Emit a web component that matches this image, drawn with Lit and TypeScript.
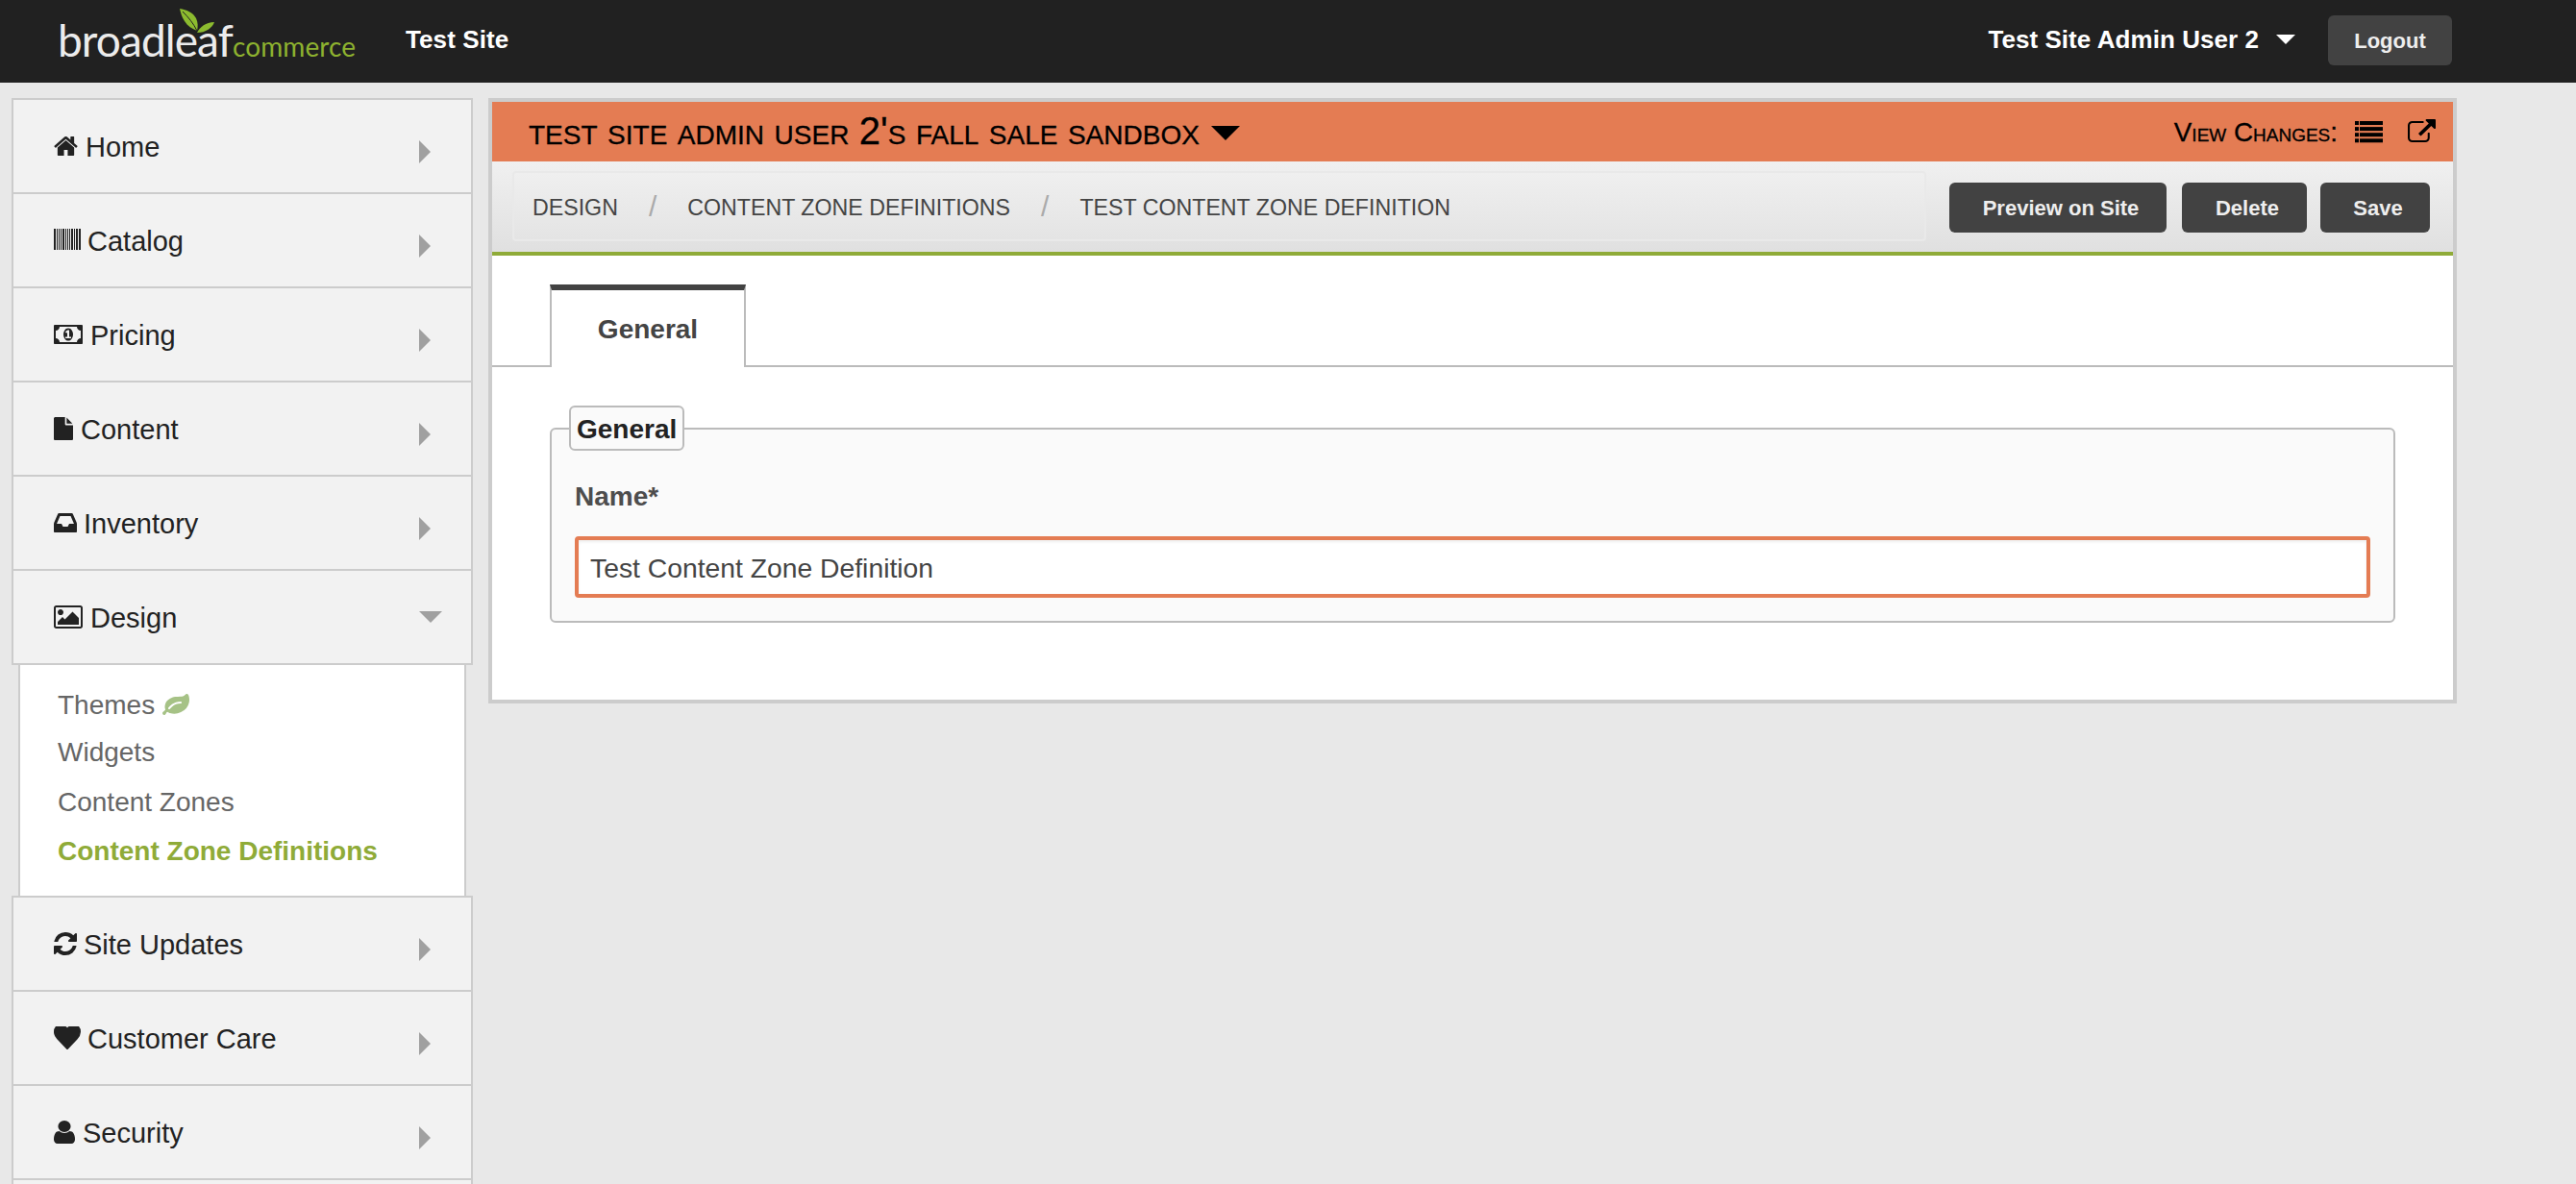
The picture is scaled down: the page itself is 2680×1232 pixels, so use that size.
import { LitElement, html, css, svg } from "lit";
import { customElement } from "lit/decorators.js";

type Ic = { vb: string; w: number; h: number; top: number; gap: number; body: unknown };

const P = {
  home: "M1472 992v480q0 26-19 45t-45 19h-384v-384h-256v384h-384q-26 0-45-19t-19-45v-480q0-1 .5-3t.5-3l575-474 575 474q1 2 1 6zm223-69l-62 74q-8 9-21 11h-3q-13 0-21-7l-692-577-692 577q-12 8-24 7-13-2-21-11l-62-74q-8-10-7-23.5t11-21.5l719-599q32-26 76-26t76 26l244 204v-195q0-14 9-23t23-9h192q14 0 23 9t9 23v408l219 182q10 8 11 21.5t-7 23.5z",
  money: "M768 1152h384v-96h-128v-448h-114l-148 117 77 98q42-34 55-54h2v287h-128v96zm512-256q0 70-21 142t-59.5 134-101.5 101-138 39-138-39-101.5-101-59.5-134-21-142 21-142 59.5-134 101.5-101 138-39 138 39 101.5 101 59.5 134 21 142zm512 256v-512q-106 0-181-75t-75-181h-1152q0 106-75 181t-181 75v512q106 0 181 75t75 181h1152q0-106 75-181t181-75zm128-832v1152q0 26-19 45t-45 19h-1792q-26 0-45-19t-19-45v-1152q0-26 19-45t45-19h1792q26 0 45 19t19 45z",
  file: "M1024 512v-472q22 14 36 28l408 408q14 14 28 36h-472zm-128 32q0 40 28 68t68 28h544v1056q0 40-28 68t-68 28h-1344q-40 0-68-28t-28-68v-1600q0-40 28-68t68-28h800v544z",
  inbox: "M1023 960h316q-1-3-2.5-8.5t-2.5-7.5l-212-496h-708l-212 496q-1 3-2.5 8.5t-2.5 7.5h316l95 192h320zm513 30v482q0 26-19 45t-45 19h-1408q-26 0-45-19t-19-45v-482q0-62 25-123l238-552q10-25 36.5-42t52.5-17h832q26 0 52.5 17t36.5 42l238 552q25 61 25 123z",
  picture: "M576 576q0 80-56 136t-136 56-136-56-56-136 56-136 136-56 136 56 56 136zm1024 384v448h-1408v-192l320-320 160 160 512-512zm96-704h-1600q-13 0-22.5 9.5t-9.5 22.5v1216q0 13 9.5 22.5t22.5 9.5h1600q13 0 22.5-9.5t9.5-22.5v-1216q0-13-9.5-22.5t-22.5-9.5zm160 32v1216q0 66-47 113t-113 47h-1600q-66 0-113-47t-47-113v-1216q0-66 47-113t113-47h1600q66 0 113 47t47 113z",
  refresh: "M1511 1056q0 5-1 7-64 268-268 434.5t-478 166.5q-146 0-282.5-55t-243.5-157l-129 129q-19 19-45 19t-45-19-19-45v-448q0-26 19-45t45-19h448q26 0 45 19t19 45-19 45l-137 137q71 66 161 102t187 36q134 0 250-65t186-179q11-17 53-117 8-23 30-23h192q13 0 22.5 9.5t9.5 22.5zm25-800v448q0 26-19 45t-45 19h-448q-26 0-45-19t-19-45 19-45l138-138q-148-137-349-137-134 0-250 65t-186 179q-11 17-53 117-8 23-30 23h-199q-13 0-22.5-9.5t-9.5-22.5v-7q65-268 270-434.5t480-166.5q146 0 284 55.5t245 156.5l130-129q19-19 45-19t45 19 19 45z",
  heart: "M896 1664q-26 0-44-18l-624-602q-10-8-27.5-26t-55.5-65.5-68-97.5-53.5-121-23.5-138q0-220 127-344t351-124q62 0 126.5 21.5t120 58 95.5 68.5 76 68q36-36 76-68t95.5-68.5 120-58 126.5-21.5q224 0 351 124t127 344q0 221-229 450l-623 600q-18 18-44 18z",
  user: "M1536 1399q0 109-62.5 187t-150.5 78h-854q-88 0-150.5-78t-62.5-187q0-85 8.5-160.5t31.5-152 58.5-131 94-89 134.5-34.5q131 128 313 128t313-128q76 0 134.5 34.5t94 89 58.5 131 31.5 152 8.5 160.5zm-256-887q0 159-112.5 271.5t-271.5 112.5-271.5-112.5-112.5-271.5 112.5-271.5 271.5-112.5 271.5 112.5 112.5 271.5z",
  ext: "M1408 928v320q0 119-84.5 203.5t-203.5 84.5h-832q-119 0-203.5-84.5t-84.5-203.5v-832q0-119 84.5-203.5t203.5-84.5h704q14 0 23 9t9 23v64q0 14-9 23t-23 9h-704q-66 0-113 47t-47 113v832q0 66 47 113t113 47h832q66 0 113-47t47-113v-320q0-14 9-23t23-9h64q14 0 23 9t9 23zm384-864v512q0 26-19 45t-45 19-45-19l-176-176-652 652q-10 10-23 10t-23-10l-114-114q-10-10-10-23t10-23l652-652-176-176q-19-19-19-45t19-45 45-19h512q26 0 45 19t19 45z",
  leaf: "M1280 704q0-26-19-45t-45-19q-172 0-318 49.5t-259.5 134-235.5 219.5q-19 21-19 45 0 26 19 45t45 19q24 0 45-19 27-24 74-71t67-66q137-124 268.5-176t313.5-52q26 0 45-19t19-45zm512-198q0 95-20 193-46 224-184.5 383t-357.5 268q-214 108-438 108-148 0-286-47-15-5-88-42t-96-37q-16 0-39.5 32t-45 70-52.5 70-60 32q-30 0-51-11t-31-24-27-42q-2-4-6-11t-5.5-10-3-9.5-1.5-13.5q0-35 31-73.5t68-65.5 68-56 31-48q0-4-14-38t-16-44q-9-51-9-104 0-115 43.5-220t119-184.5 170.5-139 204-95.5q55-18 145-25.5t179.5-9 178.5-6 163.5-24 113.5-56.5l29.5-29.5 29.5-28 27-20 36.5-16 43.5-4.5q39 0 70.5 46t47.5 112 24 124 8 96z",
};

const p = (d: string) => svg`<path d=${d}></path>`;

const barcodeBars: [number, number][] = [
  [0, 2], [3, 1], [5, 1], [7, 1], [9, 2], [12, 1], [14, 1], [16, 1], [18, 2], [21, 1], [23, 2], [26, 2],
];
const barcode = barcodeBars.map(([x, w]) => svg`<rect x=${x} y="0" width=${w} height="22"></rect>`);

const listIcon = [0, 1, 2, 3].map(
  (i) => svg`<rect x="0" y=${i * 6.1} width="4" height="4"></rect><rect x="5" y=${i * 6.1} width="24" height="4"></rect>`
);

const ROWS_A: { label: string; ic: Ic; open?: boolean }[] = [
  { label: "Home", ic: { vb: "64 256 1664 1280", w: 25, h: 20, top: 38, gap: 8, body: p(P.home) } },
  { label: "Catalog", ic: { vb: "0 0 28 22", w: 28, h: 22, top: 36, gap: 7, body: barcode } },
  { label: "Pricing", ic: { vb: "0 256 1920 1280", w: 30, h: 20, top: 38, gap: 8, body: p(P.money) } },
  { label: "Content", ic: { vb: "0 0 1536 1792", w: 20, h: 24, top: 36, gap: 8, body: p(P.file) } },
  { label: "Inventory", ic: { vb: "0 256 1536 1280", w: 24, h: 20, top: 38, gap: 7, body: p(P.inbox) } },
  { label: "Design", ic: { vb: "-64 128 1920 1536", w: 30, h: 24, top: 36, gap: 8, body: p(P.picture) }, open: true },
];
const ROWS_B: { label: string; ic: Ic }[] = [
  { label: "Site Updates", ic: { vb: "0 128 1536 1536", w: 24, h: 24, top: 36, gap: 7, body: p(P.refresh) } },
  { label: "Customer Care", ic: { vb: "0 256 1792 1408", w: 28, h: 24, top: 36, gap: 7, body: p(P.heart) } },
  { label: "Security", ic: { vb: "256 128 1280 1536", w: 22, h: 24, top: 36, gap: 8, body: p(P.user) } },
];

@customElement("app-root")
export class AppRoot extends LitElement {
  static styles = css`
    :host {
      display: block;
      height: 1232px;
      overflow: hidden;
      background: #e8e8e8;
      font-family: "Liberation Sans", Arial, sans-serif;
    }
    * { box-sizing: border-box; }

    .topbar {
      height: 86px;
      background: #212121;
      display: flex;
      align-items: flex-start;
      color: #fff;
    }
    .logo {
      position: relative;
      margin: 0 0 0 60px;
      width: 312px;
      height: 86px;
      padding-top: 14px;
      white-space: nowrap;
      font-family: Lato, sans-serif;
      line-height: 56px;
    }
    .logo .b { font-size: 46px; color: #ececec; letter-spacing: -0.9px; }
    .logo .c { font-size: 28px; color: #8db22f; letter-spacing: 0.1px; }
    .logo svg { position: absolute; left: 126px; top: 8px; }
    .site {
      margin-top: 26px;
      font: bold 26px/30px "Liberation Sans", Arial, sans-serif;
      letter-spacing: 0.1px;
      margin-left: 50px;
    }
    .user {
      margin-left: auto;
      margin-top: 26px;
      display: flex;
      align-items: flex-start;
      font: bold 26px/30px "Liberation Sans", Arial, sans-serif;
      letter-spacing: 0.06px;
    }
    .user i {
      display: block;
      margin: 10px 34px 0 18px;
      border-top: 10px solid #fff;
      border-left: 10px solid transparent;
      border-right: 10px solid transparent;
    }
    .logout {
      margin: 16px 129px 0 0;
      width: 129px;
      height: 52px;
      background: #424242;
      border-radius: 6px;
      color: #eee;
      font: bold 22px/54px "Liberation Sans", Arial, sans-serif;
      text-align: center;
    }

    .body { display: flex; align-items: flex-start; padding: 16px 0 0 12px; gap: 16px; }
    .side { width: 480px; flex: none; }
    .group { border: 2px solid #ccc; border-bottom: none; background: #f2f2f2; }
    .row {
      height: 98px;
      border-bottom: 2px solid #ccc;
      display: flex;
      align-items: flex-start;
      padding-left: 42px;
      color: #222;
      font-size: 29px;
      line-height: 32px;
    }
    .row svg { display: block; flex: none; fill: #222; }
    .row .lbl { margin-top: 33px; }
    .row .sp { flex: 1; }
    .arr.r {
      margin-top: 42px;
      width: 0;
      height: 0;
      margin-right: 42px;
      border-left: 12px solid #a0a0a0;
      border-top: 12px solid transparent;
      border-bottom: 12px solid transparent;
    }
    .arr.d {
      margin-top: 42px;
      width: 0;
      height: 0;
      margin-right: 30px;
      border-top: 12px solid #a0a0a0;
      border-left: 12px solid transparent;
      border-right: 12px solid transparent;
    }
    .sub {
      margin: 0 7px;
      height: 240px;
      background: #fff;
      border-left: 2px solid #ccc;
      border-right: 2px solid #ccc;
      padding: 26px 0 0 39px;
      font-size: 28px;
      line-height: 32px;
      color: #666;
    }
    .sub div { margin-bottom: 19px; }
    .sub .t { margin-bottom: 17px; display: flex; align-items: flex-start; }
    .sub .t svg { fill: #a6c286; margin: 4px 0 0 8px; flex: none; display: block; }
    .sub .w { margin-bottom: 20px; }
    .sub .on { color: #8fab38; font-weight: bold; }

    .panel {
      width: 2048px;
      flex: none;
      border: 4px solid #ccc;
      background: #fff;
    }
    .sandbox {
      height: 62px;
      background: #e47c53;
      color: #000;
      display: flex;
      align-items: flex-start;
      padding-left: 38px;
    }
    .sbt {
      font-size: 40px;
      line-height: 44px;
      font-variant: small-caps;
      word-spacing: -0.6px;
      -webkit-text-stroke: 0.3px #000;
      margin-top: 8px;
      white-space: nowrap;
    }
    .sbc {
      margin: 25px 0 0 12px;
      border-top: 15px solid #000;
      border-left: 15px solid transparent;
      border-right: 15px solid transparent;
    }
    .vc {
      margin-left: auto;
      margin-top: 15px;
      font-size: 27.8px;
      line-height: 34px;
      font-variant: small-caps;
      -webkit-text-stroke: 0.3px #000;
      white-space: nowrap;
    }
    .sandbox svg { display: block; flex: none; fill: #000; }
    .ic-list { margin: 20px 26px 0 18px; }
    .ic-ext { margin: 18px 18px 0 0; }

    .crumbs {
      height: 98px;
      border-bottom: 4px solid #8fab38;
      background: linear-gradient(#f0f0f0, #e0e0e0);
      display: flex;
      align-items: flex-start;
      padding: 10px 24px 0 21px;
    }
    .crumb-box {
      width: 1471px;
      height: 73px;
      border: 2px solid #e9e9e9;
      border-radius: 4px;
      background: linear-gradient(#efefef, #e4e4e4);
      display: flex;
      align-items: center;
      padding: 3px 0 0 19px;
      color: #444;
      font-size: 23.2px;
      white-space: nowrap;
    }
    .crumb-box .s {
      color: #aaa;
      font-size: 30px;
      margin: -3px 32px 0;
    }
    .btns { margin-left: 24px; margin-top: 12px; display: flex; gap: 16px; }
    .btn {
      height: 52px;
      background: #424242;
      border-radius: 6px;
      color: #eee;
      font: bold 22px/54px "Liberation Sans", Arial, sans-serif;
      text-align: center;
      padding-left: 6px;
    }
    .b1 { width: 226px; }
    .b2 { width: 130px; }
    .b3 { width: 114px; margin-left: -2px; }

    .content { padding: 30px 0 80px; }
    .tabs { border-bottom: 2px solid #bbb; height: 86px; padding-left: 60px; }
    .tab {
      width: 204px;
      height: 86px;
      background: #fff;
      border: 2px solid #bbb;
      border-top: 6px solid #424242;
      border-bottom: none;
      text-align: center;
      color: #444;
      font: bold 28px/32px "Liberation Sans", Arial, sans-serif;
      padding-top: 25px;
    }
    fieldset {
      margin: 40px 60px 0;
      padding: 0 24px 24px;
      border: 2px solid #bbb;
      border-radius: 6px;
      background: #fafafa;
      min-width: 0;
    }
    legend {
      margin-left: -6px;
      padding: 0 6px;
      height: 47px;
      border: 2px solid #bbb;
      border-radius: 6px;
      background: #fafafa;
      color: #222;
      font: bold 28px/45px "Liberation Sans", Arial, sans-serif;
    }
    .name {
      color: #4d4d4d;
      font: bold 28px/32px "Liberation Sans", Arial, sans-serif;
      margin-top: 32px;
    }
    .input {
      margin-top: 25px;
      height: 64px;
      border: 4px solid #e47c53;
      border-radius: 4px;
      background: #fff;
      box-shadow: inset 0 2px 3px rgba(0, 0, 0, 0.07);
      padding-left: 12px;
      color: #444;
      font-size: 28.3px;
      line-height: 58px;
    }
  `;

  private icon(ic: Ic) {
    return html`<svg
      viewBox=${ic.vb}
      width=${ic.w}
      height=${ic.h}
      preserveAspectRatio="none"
      style="margin-top:${ic.top}px;margin-right:${ic.gap}px"
    >${ic.body}</svg>`;
  }

  render() {
    return html`
      <div class="topbar">
        <div class="logo">
          <span class="b">broadleaf</span><span class="c">commerce</span>
          <svg width="38" height="28" viewBox="0 0 38 28">
            <path fill="#8cbb2f" d="M1 1C8 2 15 5 18 11C20 15 20 20 19 24C14 22 9 19 6 14C3 10 2 5 1 1Z"></path>
            <path fill="#8cbb2f" d="M19 26C22 20 28 15 37 15C35 21 28 26 19 26Z"></path>
            <path stroke="#212121" stroke-width="1" fill="none" d="M4 4C10 10 15 16 19 24"></path>
          </svg>
        </div>
        <div class="site">Test Site</div>
        <div class="user">Test Site Admin User 2<i></i></div>
        <div class="logout">Logout</div>
      </div>
      <div class="body">
        <div class="side">
          <div class="group">
            ${ROWS_A.map(
              (r) => html`<div class="row">
                ${this.icon(r.ic)}<span class="lbl">${r.label}</span><span class="sp"></span>
                <i class="arr ${r.open ? "d" : "r"}"></i>
              </div>`
            )}
          </div>
          <div class="sub">
            <div class="t">Themes<svg viewBox="0 128 1792 1408" width="28" height="22" preserveAspectRatio="none">${p(P.leaf)}</svg></div>
            <div class="w">Widgets</div>
            <div>Content Zones</div>
            <div class="on">Content Zone Definitions</div>
          </div>
          <div class="group">
            ${ROWS_B.map(
              (r) => html`<div class="row">
                ${this.icon(r.ic)}<span class="lbl">${r.label}</span><span class="sp"></span>
                <i class="arr r"></i>
              </div>`
            )}
            <div class="row"></div>
          </div>
        </div>
        <div class="panel">
          <div class="sandbox">
            <span class="sbt">test site admin user 2's fall sale sandbox</span>
            <i class="sbc"></i>
            <span class="vc">View Changes:</span>
            <svg class="ic-list" width="29" height="23" viewBox="0 0 29 23">${listIcon}</svg>
            <svg class="ic-ext" width="29" height="24" viewBox="0 0 1792 1536" preserveAspectRatio="none">${p(P.ext)}</svg>
          </div>
          <div class="crumbs">
            <div class="crumb-box">
              <span>DESIGN</span><span class="s">/</span>
              <span>CONTENT ZONE DEFINITIONS</span><span class="s">/</span>
              <span>TEST CONTENT ZONE DEFINITION</span>
            </div>
            <div class="btns">
              <div class="btn b1">Preview on Site</div>
              <div class="btn b2">Delete</div>
              <div class="btn b3">Save</div>
            </div>
          </div>
          <div class="content">
            <div class="tabs"><div class="tab">General</div></div>
            <fieldset>
              <legend>General</legend>
              <div class="name">Name*</div>
              <div class="input">Test Content Zone Definition</div>
            </fieldset>
          </div>
        </div>
      </div>
    `;
  }
}
